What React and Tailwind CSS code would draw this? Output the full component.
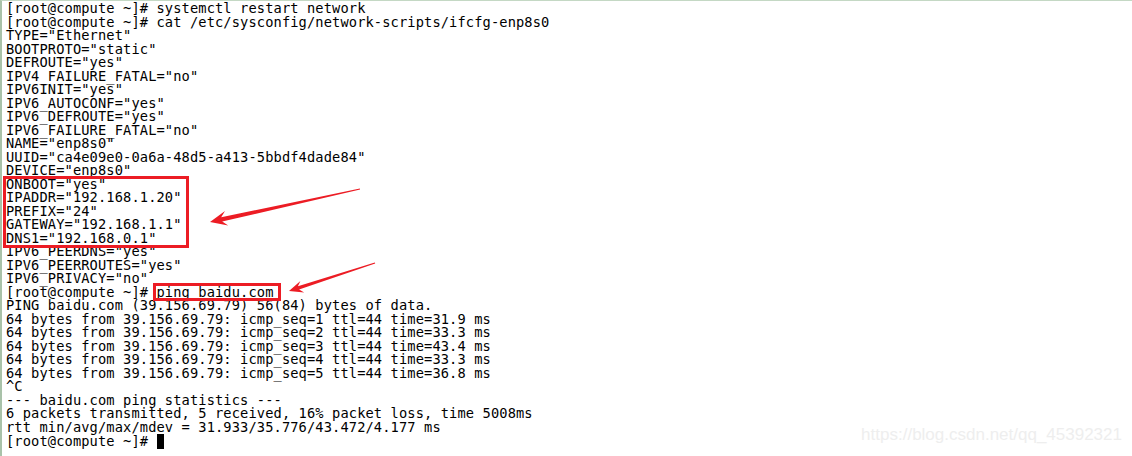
import React from "react";

const lines = [
  "[root@compute ~]# systemctl restart network",
  "[root@compute ~]# cat /etc/sysconfig/network-scripts/ifcfg-enp8s0",
  'TYPE="Ethernet"',
  'BOOTPROTO="static"',
  'DEFROUTE="yes"',
  'IPV4_FAILURE_FATAL="no"',
  'IPV6INIT="yes"',
  'IPV6_AUTOCONF="yes"',
  'IPV6_DEFROUTE="yes"',
  'IPV6_FAILURE_FATAL="no"',
  'NAME="enp8s0"',
  'UUID="ca4e09e0-0a6a-48d5-a413-5bbdf4dade84"',
  'DEVICE="enp8s0"',
  'ONBOOT="yes"',
  'IPADDR="192.168.1.20"',
  'PREFIX="24"',
  'GATEWAY="192.168.1.1"',
  'DNS1="192.168.0.1"',
  'IPV6_PEERDNS="yes"',
  'IPV6_PEERROUTES="yes"',
  'IPV6_PRIVACY="no"',
  "[root@compute ~]# ping baidu.com",
  "PING baidu.com (39.156.69.79) 56(84) bytes of data.",
  "64 bytes from 39.156.69.79: icmp_seq=1 ttl=44 time=31.9 ms",
  "64 bytes from 39.156.69.79: icmp_seq=2 ttl=44 time=33.3 ms",
  "64 bytes from 39.156.69.79: icmp_seq=3 ttl=44 time=43.4 ms",
  "64 bytes from 39.156.69.79: icmp_seq=4 ttl=44 time=33.3 ms",
  "64 bytes from 39.156.69.79: icmp_seq=5 ttl=44 time=36.8 ms",
  "^C",
  "--- baidu.com ping statistics ---",
  "6 packets transmitted, 5 received, 16% packet loss, time 5008ms",
  "rtt min/avg/max/mdev = 31.933/35.776/43.472/4.177 ms",
];

export default function App() {
  return (
    <div className="relative w-[1132px] h-[456px] bg-white overflow-hidden border-l-2 border-t border-l-[#a9c2a9] border-t-[#c4d8c4]">
      {/* terminal output */}
      <div className="pl-[4px] pt-[1px] text-black text-[13.7px] leading-[13.5px] tracking-[0.12px] font-['DejaVu_Sans_Mono',monospace]">
        {lines.map((line, i) => (
          <div key={i} className="whitespace-pre">{line}</div>
        ))}
        <div className="whitespace-pre h-[13.5px]">
          [root@compute ~]#{" "}
          <span className="inline-block w-[7px] h-[15px] bg-black align-[-3px]"></span>
        </div>
      </div>

      {/* annotations */}
      <div className="absolute left-[1px] top-[175px] w-[186px] h-[72px] border-[3px] border-[#ec1c24]"></div>
      <div className="absolute left-[151px] top-[282px] w-[128px] h-[18px] border-[3px] border-[#ec1c24]"></div>
      <svg className="absolute left-0 top-0" width="1132" height="456">
        <polygon
          fill="#ec1c24"
          points="357.9,187.4 219.2,216.3 223,210 208,221 226.2,224.6 220.2,220.5 358.1,188.6"
        />
        <polygon
          fill="#ec1c24"
          points="372.8,261.5 295.9,285.2 298.4,280 287,290 302.2,291.4 297.1,288.6 373.2,262.5"
        />
      </svg>

      <div className="absolute right-[10px] bottom-[9px] text-[17px] text-[#eeeeee] font-['Liberation_Sans',sans-serif]">
        https://blog.csdn.net/qq_45392321
      </div>
    </div>
  );
}
